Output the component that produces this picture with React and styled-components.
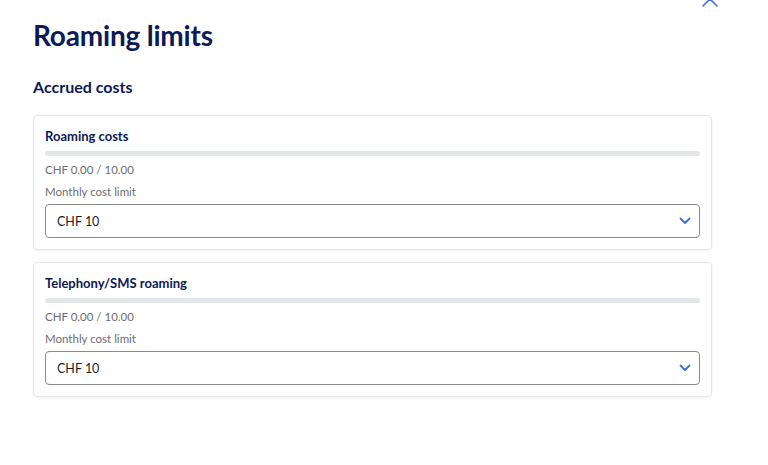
import React from "react";
import styled, { createGlobalStyle } from "styled-components";

const Global = createGlobalStyle`
  html, body { margin: 0; padding: 0; background: #fff; }
  body { font-family: "Lato", "Noto Sans", sans-serif; -webkit-font-smoothing: antialiased; }
  * { box-sizing: border-box; }
`;

const Page = styled.div`
  position: relative;
  width: 768px;
  height: 465px;
  padding: 16px 56px 0 33px;
  overflow: hidden;
`;

const Close = styled.button`
  position: absolute;
  top: -10px;
  right: 49px;
  width: 18px;
  height: 18px;
  padding: 0;
  border: none;
  background: none;
  color: #3d6fe0;
`;

const Title = styled.h1`
  margin: 0;
  font-size: 28px;
  line-height: 38px;
  font-weight: 700;
  color: #0d1a55;
  letter-spacing: -0.2px;
`;

const Subtitle = styled.h2`
  margin: 22px 0 17px;
  font-size: 16px;
  line-height: 22px;
  font-weight: 700;
  color: #0d1a55;
`;

const Cards = styled.div`
  display: flex;
  flex-direction: column;
  gap: 12px;
`;

const Card = styled.section`
  border: 1px solid #e6e6e6;
  border-radius: 4px;
  box-shadow: 0 1px 3px rgba(0, 0, 0, 0.06);
  padding: 12px 11px 11px 11px;
  display: flex;
  flex-direction: column;
`;

const CardTitle = styled.h3`
  margin: 0;
  font-size: 13px;
  line-height: 17px;
  font-weight: 700;
  color: #0d1a55;
`;

const Track = styled.div`
  margin-top: 6px;
  height: 5px;
  border-radius: 3px;
  background: #e4e7ea;
  overflow: hidden;
`;

const Fill = styled.div`
  height: 100%;
  background: #3d6fe0;
`;

const Meta = styled.div`
  font-size: 11.5px;
  line-height: 14px;
  color: #6e6e6e;
  margin-top: ${(p) => p.$mt}px;
`;

const Select = styled.div`
  margin-top: 5px;
  height: 34px;
  border: 1px solid #8a8a8a;
  border-radius: 4px;
  display: flex;
  align-items: center;
  justify-content: space-between;
  padding: 0 8px 0 11px;
  font-size: 12.5px;
  color: #1d1d1d;
`;

const Chevron = () => (
  <svg width="12" height="8" viewBox="0 0 12 8" fill="none">
    <path d="M1.5 1.5 6 6l4.5-4.5" stroke="#3d6fe0" strokeWidth="1.8" strokeLinecap="round" strokeLinejoin="round" />
  </svg>
);

const data = [
  { title: "Roaming costs", used: 0, limit: 10 },
  { title: "Telephony/SMS roaming", used: 0, limit: 10 },
];

export default function App() {
  return (
    <>
      <Global />
      <Page>
        <Close aria-label="Close">
          <svg width="18" height="18" viewBox="0 0 18 18" fill="none">
            <path d="M2 2l14 14M16 2L2 16" stroke="currentColor" strokeWidth="1.6" strokeLinecap="round" />
          </svg>
        </Close>
        <Title>Roaming limits</Title>
        <Subtitle>Accrued costs</Subtitle>
        <Cards>
          {data.map((d) => (
            <Card key={d.title}>
              <CardTitle>{d.title}</CardTitle>
              <Track>
                <Fill style={{ width: `${(d.used / d.limit) * 100}%` }} />
              </Track>
              <Meta $mt={7}>CHF {d.used.toFixed(2)} / {d.limit.toFixed(2)}</Meta>
              <Meta $mt={8}>Monthly cost limit</Meta>
              <Select>
                <span>CHF {d.limit}</span>
                <Chevron />
              </Select>
            </Card>
          ))}
        </Cards>
      </Page>
    </>
  );
}
